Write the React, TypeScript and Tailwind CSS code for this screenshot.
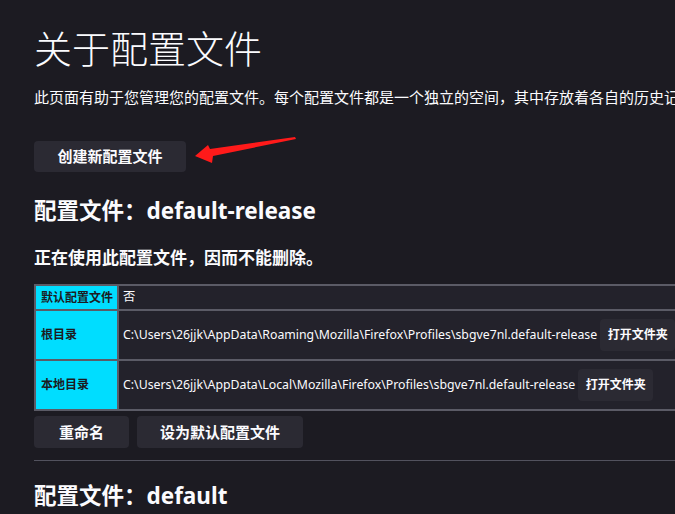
import React from 'react'

const cjk = { fontFamily: '"Noto Sans", "Noto Sans CJK SC", sans-serif' }

function Btn({ children, className = '' }: { children: React.ReactNode; className?: string }) {
  return (
    <button className={`bg-[#2b2a33] text-[#fbfbfe] font-bold rounded-[4px] shrink-0 ${className}`}>
      {children}
    </button>
  )
}

export default function App() {
  const rows = [
    { label: '默认配置文件', value: '否' },
    {
      label: '根目录',
      value: 'C:\\Users\\26jjk\\AppData\\Roaming\\Mozilla\\Firefox\\Profiles\\sbgve7nl.default-release',
      open: true,
    },
    {
      label: '本地目录',
      value: 'C:\\Users\\26jjk\\AppData\\Local\\Mozilla\\Firefox\\Profiles\\sbgve7nl.default-release',
      open: true,
    },
  ]

  return (
    <div className="relative w-[675px] h-[514px] overflow-hidden bg-[#1c1b22] text-[#fbfbfe]" style={cjk}>
      <div className="w-[1000px] pl-[34px] pt-[24px]">
        <h1 className="text-[38px] font-light leading-[48px]">关于配置文件</h1>
        <p className="text-[15px] mt-[14px] leading-[22px] whitespace-nowrap">
          此页面有助于您管理您的配置文件。每个配置文件都是一个独立的空间，其中存放着各自的历史记录、书签、设置和附加组件。
        </p>
        <Btn className="mt-[33px] h-[31px] w-[152px] text-[15px]">创建新配置文件</Btn>

        <h2 className="text-[22.5px] font-bold mt-[24px] leading-[30px]">配置文件：default-release</h2>
        <h3 className="text-[17px] font-bold mt-[20px] leading-[24px]">正在使用此配置文件，因而不能删除。</h3>

        <table className="mt-[14px] border-collapse border-2 border-[#5b5b66] text-[12.3px]">
          <tbody>
            {rows.map((r) => (
              <tr key={r.label} className={r.open ? 'h-[50px]' : 'h-[25px]'}>
                <th className="bg-[#00ddff] text-[#1c1b22] text-[12px] font-bold text-left pl-[5px] pr-[4px] w-[83px] border-2 border-[#5b5b66]">
                  {r.label}
                </th>
                <td className="bg-[#23222b] border-2 border-[#5b5b66] pl-[4px] pr-[4px]">
                  <div className="flex items-center gap-[3px] whitespace-nowrap">
                    <span>{r.value}</span>
                    {r.open && (
                      <Btn className="h-[32px] w-[75px] text-[12px]">打开文件夹</Btn>
                    )}
                  </div>
                </td>
              </tr>
            ))}
          </tbody>
        </table>

        <div className="flex gap-[8px] mt-[5px]">
          <Btn className="h-[32px] w-[95px] text-[15px]">重命名</Btn>
          <Btn className="h-[32px] w-[166px] text-[15px]">设为默认配置文件</Btn>
        </div>

        <hr className="mt-[12px] w-[641px] border-t border-[#52525e]" />

        <h2 className="text-[22.5px] font-bold mt-[20px] leading-[30px]">配置文件：default</h2>
      </div>

      <svg className="absolute left-[190px] top-[133px]" width="112" height="34" viewBox="0 0 112 34">
        <path d="M105 4 L20 16 L18 12 L5 23 L22 30 L23 23 L106 6 Z" fill="#ff1a1a" />
      </svg>
    </div>
  )
}
